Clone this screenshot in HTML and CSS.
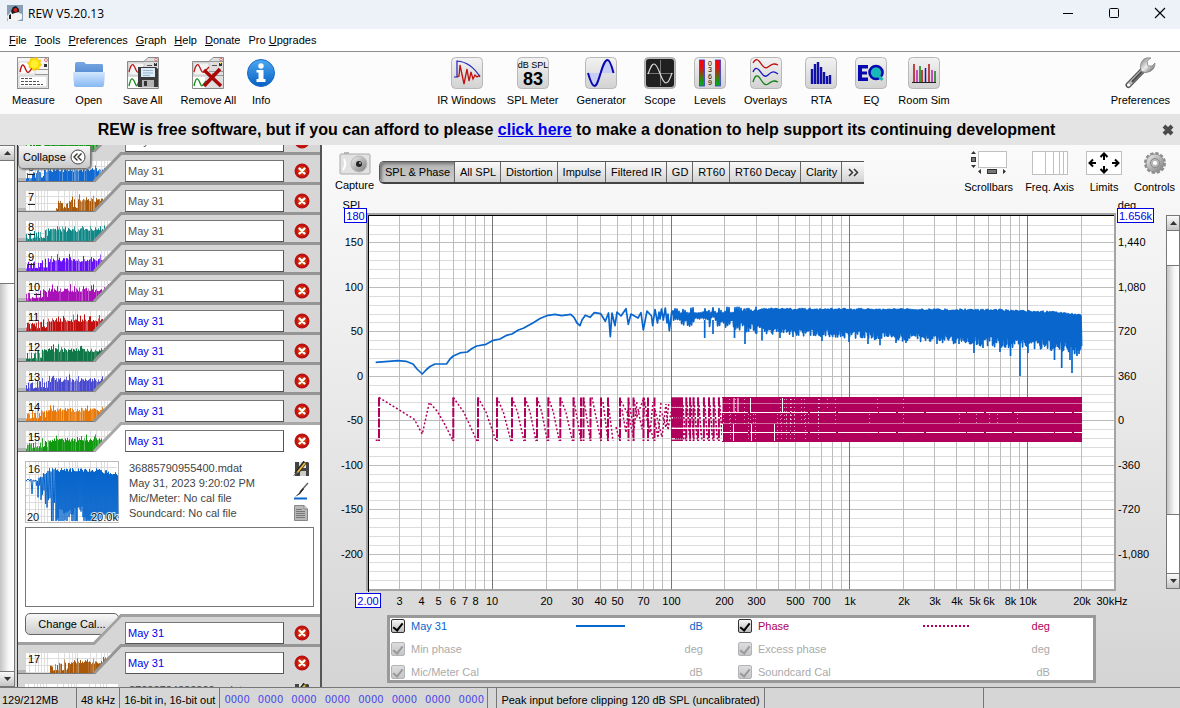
FILE: index.html
```
<!DOCTYPE html>
<html lang="en">
<head>
<meta charset="utf-8">
<title>REW V5.20.13</title>
<link rel="stylesheet" href="styles.css">
</head>
<body>
<svg class="defs" aria-hidden="true">
  <defs>
    <linearGradient id="tile" x1="0" y1="0" x2="0" y2="1"><stop offset="0" stop-color="#f2f2f2"/><stop offset="1" stop-color="#d2d2d2"/></linearGradient>
    <linearGradient id="folder" x1="0" y1="0" x2="0" y2="1"><stop offset="0" stop-color="#d3e7fd"/><stop offset="1" stop-color="#86b8f3"/></linearGradient>
    <linearGradient id="folderBack" x1="0" y1="0" x2="0" y2="1"><stop offset="0" stop-color="#79a7e2"/><stop offset="1" stop-color="#4d84cf"/></linearGradient>
    <linearGradient id="infoBlue" x1="0" y1="0" x2="0" y2="1"><stop offset="0" stop-color="#4ea8f2"/><stop offset="1" stop-color="#0560c4"/></linearGradient>
    <linearGradient id="level" x1="0" y1="0" x2="0" y2="1"><stop offset="0" stop-color="#ff0000"/><stop offset=".3" stop-color="#e01010"/><stop offset=".75" stop-color="#2a8a10"/><stop offset="1" stop-color="#00b020"/></linearGradient>
    <linearGradient id="metal" x1="0" y1="0" x2="1" y2="1"><stop offset="0" stop-color="#f0f0f0"/><stop offset="1" stop-color="#7a7a7a"/></linearGradient>
    <linearGradient id="jaw" x1="0" y1="0" x2="1" y2="1"><stop offset="0" stop-color="#777"/><stop offset=".5" stop-color="#ececec"/><stop offset="1" stop-color="#444"/></linearGradient>
    <radialGradient id="redBall"><stop offset="0" stop-color="#f08a10"/><stop offset=".5" stop-color="#d04010"/><stop offset="1" stop-color="#c40c0c"/></radialGradient>
    <symbol id="doc" viewBox="0 0 32 32">
      <path d="M.5 31.500V4.500H17L21 .5H31.500V31.500Z" fill="#dedede" stroke="#8a8a8a"/>
      <path d="M17 4.500H31M17 14.500H31M17 18.500H31" stroke="#999" fill="none"/>
      <rect x="2" y="6" width="15" height="12" fill="#f4f4f4" stroke="#bbb" stroke-width=".6"/>
      <path d="M2 15C5 3 7 8 9 13S13 14 17 10" fill="none" stroke="#c01818" stroke-width="1.300"/>
      <circle cx="29" cy="2.500" r="1.300" fill="#fff" stroke="#d04040" stroke-width=".7"/>
      <rect x="27" y="6" width="3" height="3" fill="#333"/><rect x="28" y="6" width="1" height="1" fill="#ffd000"/>
      <path d="M20 8.500H25M20 17H25" stroke="#555"/>
    </symbol>
    <symbol id="disk" viewBox="0 0 20 20">
      <path d="M0 0H18L20 2V20H0Z" fill="#3a3a3c"/><rect x="3" y="1" width="14" height="9" fill="#dcebf8"/><path d="M5 3.500H15M5 6H15M5 8.500H12" stroke="#8ca7c0" stroke-width=".8"/><rect x="4" y="13" width="12" height="7" fill="#b4b4b4"/><rect x="6" y="14" width="3" height="5" fill="#333"/>
    </symbol>
    <symbol id="pencildisk" viewBox="0 0 16 16">
      <path d="M2 1H15L16 2V15H2Z" fill="#444"/><path d="M6 1H13V7H6Z" fill="#e4e4e4"/><path d="M7 10H13V15H7Z" fill="#ccc"/><path d="M12 1L3 13" stroke="#222" stroke-width="4"/><path d="M12 2L4 12" stroke="#e9b93c" stroke-width="2"/><path d="M4 10L0 15L5 13Z" fill="#555"/>
    </symbol>
    <symbol id="brush" viewBox="0 0 16 18">
      <path d="M15 1L7 10" stroke="#666" stroke-width="1.500"/><path d="M10 6L6 11L2 15L7 12L11 7Z" fill="#222"/><path d="M1 16.500H14" stroke="#0866cc" stroke-width="2"/>
    </symbol>
    <symbol id="note" viewBox="0 0 16 16">
      <path d="M1.500.5H11L14.500 4V15.500H1.500Z" fill="#b8b8b8" stroke="#888"/><path d="M11 .5V4H14.500" fill="#ddd" stroke="#888"/><path d="M3 4.500H9M3 6.500H12M3 8.500H12M3 10.500H12M3 12.500H12" stroke="#777"/>
    </symbol>
    <symbol id="cross" viewBox="0 0 16 16">
      <circle cx="8" cy="8" r="7.500" fill="#bd1010"/><circle cx="8" cy="8" r="5.800" fill="url(#redBall)"/><path d="M5.500 5.500L10.500 10.500M10.500 5.500L5.500 10.500" stroke="#fff" stroke-width="2.400" stroke-linecap="round"/>
    </symbol>
  </defs>
</svg>

<header class="titlebar">
  <svg class="app-icon" width="16" height="16" viewBox="0 0 16 16" aria-hidden="true"><rect width="16" height="16" fill="#86a0b8"/><path d="M0 11L3 8L5 5L11 5L12 8L15 9V14L10 16H1Z" fill="#f4f4f4"/><path d="M4 6L6 2L9 1L12 4L12 7L8 8L5 9Z" fill="#1d1d22"/><circle cx="8.500" cy="5" r="2" fill="#d22"/><path d="M2 10L4 9V14L2 14Z" fill="#222"/></svg>
  <h1 class="titlebar-text">REW V5.20.13</h1>
  <div class="window-controls">
    <button aria-label="Minimize"><svg width="12" height="12"><path d="M1 6.500H11" stroke="#000"/></svg></button>
    <button aria-label="Maximize"><svg width="12" height="12"><rect x="1.500" y="1.500" width="9" height="9" rx="1" fill="none" stroke="#000"/></svg></button>
    <button aria-label="Close"><svg width="12" height="12"><path d="M1 1L11 11M11 1L1 11" stroke="#000" stroke-width="1.100"/></svg></button>
  </div>
</header>

<nav class="menubar">
  <button><u>F</u>ile</button><button><u>T</u>ools</button><button><u>P</u>references</button><button><u>G</u>raph</button><button><u>H</u>elp</button><button><u>D</u>onate</button><button>Pro <u>U</u>pgrades</button>
</nav>

<div class="toolbar">
  <div class="tool-group">
    <button class="tool"><svg width="32" height="32" viewBox="0 0 32 32"><rect x=".5" y=".5" width="31" height="31" fill="#f4f4f4" stroke="#8f8f8f"/><rect x="2" y="5" width="16" height="12" fill="#fff" stroke="#bbb" stroke-width=".6"/><path d="M3 15C5 4 7 8 9 13S13 14 16 9" fill="none" stroke="#c01818" stroke-width="1.400"/><rect x="2" y="19" width="28" height="11" fill="#fff" stroke="#aaa" stroke-width=".6"/><path d="M4 21.500H15M4 24.500H22M4 27.500H26" stroke="#555" stroke-dasharray="3 1"/><path d="M18 12.500H31M18 17.500H31" stroke="#999"/><circle cx="29" cy="3" r="1.500" fill="#fff" stroke="#d04040" stroke-width=".7"/><rect x="27" y="7" width="3" height="3" fill="#333"/><path d="M16 1L18 2L20 0L21 3L24 3L23 6L25 8L22 10L22 13L19 12L16 14L15 11L12 11L12 8L10 6L13 5L13 2Z" fill="#ffd800" stroke="#f0c000" stroke-width=".5"/><circle cx="17.500" cy="7" r="4" fill="#fff030"/></svg><span>Measure</span></button>
    <button class="tool"><svg width="32" height="32" viewBox="0 0 32 32"><path d="M2 7Q2 5 4 5H11L13 7H29Q30 7 30 9V20H2Z" fill="url(#folderBack)"/><path d="M0 15H32L31 28Q31 30 29 30H3Q1 30 1 28Z" fill="url(#folder)"/></svg><span>Open</span></button>
    <button class="tool"><svg width="32" height="32" viewBox="0 0 32 32"><use href="#doc" width="32" height="32"/><rect x="1" y="20" width="12" height="11" fill="#fff"/><path d="M2 29C4 19 6 21 8 26S10 29 12 24" fill="none" stroke="#189018" stroke-width="1.400"/><use href="#disk" x="11" y="10" width="20" height="20"/></svg><span>Save All</span></button>
    <button class="tool"><svg width="32" height="32" viewBox="0 0 32 32"><use href="#doc" width="32" height="32"/><rect x="1" y="20" width="12" height="11" fill="#fff"/><path d="M2 29C4 19 6 21 8 26S10 29 14 24" fill="none" stroke="#189018" stroke-width="1.400"/><path d="M12 13L29 29M28 12L12 29" stroke="#a80808" stroke-width="3.600"/></svg><span>Remove All</span></button>
    <button class="tool tool-tight"><svg width="28" height="32" viewBox="0 0 28 32"><circle cx="14" cy="16" r="13.500" fill="url(#infoBlue)" stroke="#1a6cc8"/><circle cx="14" cy="9" r="2.700" fill="#fff"/><path d="M9.500 13H16.500V22H18.500V25H9.500V22H11.500V15.500H9.500Z" fill="#fff"/></svg><span>Info</span></button>
  </div>
  <div class="tool-group tool-group-mid">
    <button class="tool tool-tight"><svg width="32" height="32" viewBox="0 0 32 32"><rect x=".5" y=".5" width="31" height="31" rx="4" fill="url(#tile)" stroke="#b8b8b8"/><path d="M3 20H6V4Q20 5 29 20" fill="none" stroke="#2020c0" stroke-width="1.200"/><path d="M6 20L8 19L9 8L13 27L16 12L18 24L20 15L22 22L24 18L26 20L29 18" fill="none" stroke="#c01010" stroke-width="1.300"/></svg><span>IR Windows</span></button>
    <button class="tool"><svg width="32" height="32" viewBox="0 0 32 32"><rect x=".5" y=".5" width="31" height="31" rx="4" fill="url(#tile)" stroke="#b8b8b8"/><text x="16" y="11" class="icon-db">dB SPL</text><text x="16" y="28" class="icon-num">83</text></svg><span>SPL Meter</span></button>
    <button class="tool"><svg width="32" height="32" viewBox="0 0 32 32"><rect x=".5" y=".5" width="31" height="31" rx="4" fill="url(#tile)" stroke="#b8b8b8"/><path d="M3 16H16C13 24 12 29 9.500 29S5 22 3 16M16 16C18 8 20 3 22.500 3S27 9 28 16Z" fill="#c8cdf5"/><path d="M3 16C5 23 7 29 9.500 29C14 29 17 3 22.500 3C25 3 27 10 28.500 16" fill="none" stroke="#0808b0" stroke-width="2"/></svg><span>Generator</span></button>
    <button class="tool"><svg width="32" height="32" viewBox="0 0 32 32"><rect x=".5" y=".5" width="31" height="31" rx="4" fill="#bbb" stroke="#aaa"/><rect x="2" y="2" width="28" height="28" rx="3" fill="#202020"/><path d="M3 16.500H29M16.500 3V29" stroke="#777"/><path d="M4 17C7 9 8 7 10 7C15 7 17 26 22 26C25 26 26 21 28 16" fill="none" stroke="#ddd" stroke-width="1.200"/></svg><span>Scope</span></button>
    <button class="tool"><svg width="32" height="32" viewBox="0 0 32 32"><rect x=".5" y=".5" width="31" height="31" rx="4" fill="url(#tile)" stroke="#b8b8b8"/><rect x="5.500" y="3" width="5" height="26" fill="url(#level)" stroke="#3838d0" stroke-width=".8"/><rect x="21.500" y="3" width="5" height="26" fill="url(#level)" stroke="#3838d0" stroke-width=".8"/><g class="icon-scale"><text x="16" y="9">0</text><text x="16" y="15">3</text><text x="16" y="22">6</text><text x="16" y="28">9</text></g></svg><span>Levels</span></button>
    <button class="tool"><svg width="32" height="32" viewBox="0 0 32 32"><rect x=".5" y=".5" width="31" height="31" rx="4" fill="url(#tile)" stroke="#b8b8b8"/><g fill="none" stroke-width="1.300"><path d="M3 6C5 2 7 2 9 4S14 13 18 10S24 6 28 8" stroke="#c01010"/><path d="M3 15C5 10 7 11 9 13S14 22 18 18S24 14 28 17" stroke="#1818c0"/><path d="M3 25C5 18 7 18 9 20S14 30 18 27S24 23 28 25" stroke="#108010"/></g></svg><span>Overlays</span></button>
    <button class="tool"><svg width="32" height="32" viewBox="0 0 32 32"><rect x=".5" y=".5" width="31" height="31" rx="4" fill="url(#tile)" stroke="#b8b8b8"/><path d="M7 27V12M10 27V7M13 27V5M16 27V10M19 27V15M22 27V19M25 27V18" stroke="#1010a8" stroke-width="2.400"/></svg><span>RTA</span></button>
    <button class="tool"><svg width="32" height="32" viewBox="0 0 32 32"><rect x=".5" y=".5" width="31" height="31" rx="4" fill="url(#tile)" stroke="#b8b8b8"/><path d="M3 8H13V11.500H7V14.500H12V17.500H7V20.500H13V24H3Z" fill="#0808b0"/><circle cx="21" cy="15.500" r="6.500" fill="#18b8b8" stroke="#0808b0" stroke-width="2.600"/><path d="M22 17L27.500 23" stroke="#18b8b8" stroke-width="3"/></svg><span>EQ</span></button>
    <button class="tool tool-tight"><svg width="32" height="32" viewBox="0 0 32 32"><rect x=".5" y=".5" width="31" height="31" rx="4" fill="url(#tile)" stroke="#b8b8b8"/><g stroke-width="1.500"><path d="M6 25V7M14 25V13M21 25V7" stroke="#b01010"/><path d="M9 25V13M24 25V13" stroke="#c018c0"/><path d="M12 25V9M27 25V14" stroke="#108010"/><path d="M17.500 25V11" stroke="#1818c0"/></g><path d="M4 25.500H28" stroke="#222"/></svg><span>Room Sim</span></button>
  </div>
  <div class="tool-group">
    <button class="tool"><svg width="32" height="32" viewBox="0 0 32 32"><path d="M4.500 28L19 13" stroke="#555" stroke-width="6" stroke-linecap="round"/><path d="M5 27.500L19 13" stroke="#b8b8b8" stroke-width="3.500" stroke-linecap="round"/><path d="M8 25L18 14.500" stroke="#4c4c4c" stroke-width="2"/><path d="M17 14Q15 6 20 2Q23 0 27 1L23 4L24 9L28 9L31 6Q31 12 26 14.500Q21 17 17 14Z" fill="url(#jaw)" stroke="#777" stroke-width=".7"/><circle cx="4.500" cy="28" r="1.500" fill="#fff"/></svg><span>Preferences</span></button>
  </div>
</div>

<div class="donate">
  <p>REW is free software, but if you can afford to please <a href="#donate">click here</a> to make a donation to help support its continuing development</p>
  <button class="donate-close" aria-label="Dismiss"><svg width="14" height="14"><path d="M3 3L11 11M11 3L3 11" stroke="#4a4a4a" stroke-width="4"/></svg></button>
</div>

<main class="workspace">
  <div class="scrollbar scrollbar-list"><button aria-label="Scroll up"><svg width="7" height="4"><path d="M0 4L3.500 0L7 4Z" fill="#333"/></svg></button><div class="track"><div class="thumb"></div></div><button aria-label="Scroll down"><svg width="7" height="4"><path d="M0 0L3.500 4L7 0Z" fill="#333"/></svg></button></div>
  <section class="measurements" aria-label="Measurements">
    <button class="collapse">Collapse <svg width="16" height="16" viewBox="0 0 16 16"><circle cx="8" cy="8" r="7" fill="#fff" stroke="#444"/><path d="M7.500 4.500L4 8L7.500 11.500M11.500 4.500L8 8L11.500 11.500" fill="none" stroke="#333" stroke-width="1.400"/></svg></button>
    <ul class="entries" id="entries"></ul>
  </section>

  <section class="graph" aria-label="Graph">
    <div class="graph-bar">
      <button class="tool capture"><svg width="32" height="24" viewBox="0 0 32 24"><path d="M5 1H10V4H5Z" fill="#bbb"/><rect x="1" y="3" width="30" height="20" rx="1" fill="#e2e2e2" stroke="#aaa"/><path d="M5 8Q8 13 4 19" fill="none" stroke="#fff" stroke-width="2"/><circle cx="20" cy="13" r="8" fill="url(#metal)" stroke="#bbb"/><circle cx="20" cy="13" r="3" fill="#222"/><circle cx="21" cy="12" r="1" fill="#bbc"/></svg><span>Capture</span></button>
      <div class="tabs">
        <button class="tab active">SPL &amp; Phase</button><button class="tab">All SPL</button><button class="tab">Distortion</button><button class="tab">Impulse</button><button class="tab">Filtered IR</button><button class="tab">GD</button><button class="tab">RT60</button><button class="tab">RT60 Decay</button><button class="tab">Clarity</button><button class="tab" aria-label="More"><svg width="11" height="9"><path d="M1 1L4.500 4.500L1 8M6 1L9.500 4.500L6 8" fill="none" stroke="#333" stroke-width="1.500"/></svg></button>
      </div>
      <div class="graph-tools">
        <button class="tool"><svg width="38" height="26" viewBox="0 0 38 26"><rect x="8.500" y="1.500" width="28" height="16" fill="#fff" stroke="#c0c0c0"/><path d="M1 4L3.500 1L6 4ZM1 15L3.500 18L6 15ZM11 19V24L8 21.500ZM33 19V24L36 21.500Z" fill="#333"/><rect x="1.500" y="7.500" width="4" height="4" fill="#777" stroke="#333"/><rect x="17.500" y="19.500" width="9" height="4" fill="#777" stroke="#333"/></svg><span>Scrollbars</span></button>
        <button class="tool"><svg width="36" height="26" viewBox="0 0 36 26"><rect x=".5" y="1.500" width="35" height="23" fill="#fff" stroke="#c0c0c0"/><path d="M13.500 2V24M21.500 2V24M27.500 2V24M31.500 2V24" stroke="#c0c0c0"/></svg><span>Freq. Axis</span></button>
        <button class="tool"><svg width="36" height="26" viewBox="0 0 36 26"><rect x=".5" y="1.500" width="35" height="23" fill="#fff" stroke="#c0c0c0"/><path d="M7 9.500L3.500 13L7 16.500M3.500 13H10M29 9.500L32.500 13L29 16.500M32.500 13H26M14.500 7L18 3.500L21.500 7M18 4V10M14.500 19L18 22.500L21.500 19M18 22V16" fill="none" stroke="#000" stroke-width="2"/></svg><span>Limits</span></button>
        <button class="tool"><svg width="24" height="26" viewBox="0 0 24 26"><circle cx="12" cy="13" r="9.500" fill="none" stroke="#8c8c8c" stroke-width="3" stroke-dasharray="3.200 1.774"/><circle cx="12" cy="13" r="9" fill="url(#metal)" stroke="#909090"/><circle cx="12" cy="13" r="4.500" fill="#bbb" stroke="#888"/><circle cx="12" cy="13" r="2" fill="#fff"/></svg><span>Controls</span></button>
      </div>
    </div>
    <div class="plot-row">
      <svg class="plot" id="plot" viewBox="336 198 830 412" role="img" aria-label="SPL and phase against frequency"></svg>
      <div class="scrollbar scrollbar-plot"><button aria-label="Scroll up"><svg width="7" height="4"><path d="M0 4L3.500 0L7 4Z" fill="#333"/></svg></button><div class="track"><div class="thumb"></div></div><button aria-label="Scroll down"><svg width="7" height="4"><path d="M0 0L3.500 4L7 0Z" fill="#333"/></svg></button></div>
    </div>
    <div class="legend">
      <label class="trace spl"><input type="checkbox" checked><span>May 31</span><i class="swatch"></i><b>dB</b></label>
      <label class="trace phase"><input type="checkbox" checked><span>Phase</span><i class="swatch"></i><b>deg</b></label>
      <label class="trace"><input type="checkbox" checked disabled><span>Min phase</span><i></i><b>deg</b></label>
      <label class="trace"><input type="checkbox" checked disabled><span>Excess phase</span><i></i><b>deg</b></label>
      <label class="trace"><input type="checkbox" checked disabled><span>Mic/Meter Cal</span><i></i><b>dB</b></label>
      <label class="trace"><input type="checkbox" checked disabled><span>Soundcard Cal</span><i></i><b>dB</b></label>
    </div>
  </section>
</main>

<footer class="status">
  <span class="cell cell-memory">129/212MB</span><span class="cell">48 kHz</span><span class="cell">16-bit in, 16-bit out</span>
  <span class="cell cell-bits"><b>0000</b><b>0000</b><b>0000</b><b>0000</b><b>0000</b><b>0000</b><b>0000</b><b>0000</b></span>
  <span class="cell"></span><span class="cell">Peak input before clipping 120 dB SPL (uncalibrated)</span><span class="cell cell-wide"></span><span></span>
</footer>
<script src="app.js"></script>
</body>
</html>
```
FILE: styles.css
```
* { box-sizing: border-box; }
html, body { height: 100%; }
body {
  margin: 0;
  display: flex;
  flex-direction: column;
  overflow: hidden;
  background: #fcfcfc;
  color: #000;
  font: 11px/14px "Liberation Sans", Arial, sans-serif;
}
button, input, textarea { font: inherit; color: inherit; }
button { margin: 0; padding: 0; border: 0; background: none; }
svg { display: block; flex: none; }
.defs { position: absolute; width: 0; height: 0; }

.titlebar { flex: none; height: 29px; display: flex; align-items: center; padding: 0 5px 3px 7px; background: #edf2f9; }
.titlebar-text { margin: 0 0 0 5px; padding-top: 2px; font: 12px/16px "Open Sans", sans-serif; }
.window-controls { margin-left: auto; display: flex; }
.window-controls button { width: 46px; height: 24px; display: grid; place-items: center; }
.window-controls button:last-child { width: 30px; margin-left: 8px; }

.menubar { flex: none; height: 23px; display: flex; align-items: center; gap: 8px; padding: 0 9px; background: #fff; border-bottom: 1px solid #8e8e8e; }

.toolbar { flex: none; height: 62px; display: flex; justify-content: space-between; padding: 0 1px 0 3px; }
.tool-group { display: flex; }
.tool-group-mid { margin-left: 8px; }
.tool { display: flex; flex-direction: column; align-items: center; padding: 5px 9px 0; white-space: nowrap; }
.tool span { margin-top: 4px; }
.tool-tight { padding: 5px 2px 0; }
.icon-db { font-size: 9px; text-anchor: middle; }
.icon-num { font-size: 18px; font-weight: bold; text-anchor: middle; }
.icon-scale { font-size: 7px; text-anchor: middle; }

.donate { flex: none; height: 31px; display: flex; align-items: center; padding: 0 5px 0 0; background: #e4e4e4; }
.donate p { flex: 1; margin: 0; padding: 1px 8px 0 0; text-align: center; font-size: 16px; line-height: 20px; font-weight: bold; white-space: nowrap; }
.donate a { color: #0000f0; }

.workspace { flex: 1; min-height: 0; display: flex; background: #d6d6d6; }

.scrollbar { display: flex; flex-direction: column; width: 15px; flex: none; border: 1px solid #777; border-left: 0; background: #fff; }
.scrollbar button { height: 15px; display: grid; place-items: center; background: linear-gradient(#fafafa, #c4c4c4); }
.scrollbar button:first-child { border-bottom: 1px solid #777; }
.scrollbar button:last-child { border-top: 1px solid #777; }
.scrollbar .track { flex: 1; display: flex; flex-direction: column; }
.scrollbar .thumb { background: linear-gradient(90deg, #c4c4c4, #f6f6f6 60%, #fff); }
.scrollbar-list .track { justify-content: flex-end; }
.scrollbar-list .thumb { height: 76%; border-top: 1px solid #777; }
.scrollbar-plot { width: 14px; border-left: 1px solid #777; margin: 17px 0 21px; }
.scrollbar-plot .thumb { height: 73%; margin-top: 34px; border: 1px solid #777; border-width: 1px 0; }

.measurements { position: relative; flex: none; width: 305px; margin-left: 2px; overflow: hidden; border-left: 1px solid #333; border-right: 2px solid #555; }
.collapse { position: absolute; z-index: 2; left: 0; top: 1px; display: flex; align-items: center; gap: 4px; height: 23px; padding: 0 4px; border: 1px solid #777; border-top: 0; border-radius: 0 0 5px 5px; background: linear-gradient(#f6f6f6, #c8c8c8); box-shadow: 1px 1px 2px #777; }
.entries { list-style: none; margin: -23px 0 0; padding: 0; }
.entry { position: relative; height: 30px; display: grid; grid-template-columns: 107px 1fr 36px; align-items: start; padding-top: 8px; }
.entry-shape { position: absolute; left: 0; top: 0; width: 100%; height: 31px; overflow: hidden; }
.entry-name { position: relative; min-width: 0; height: 22px; padding: 0 2px; border: 1px solid #777; border-right-color: #555; border-bottom-color: #555; border-radius: 0; background: #fff; color: #505050; outline: 0; }
.entry.unsaved .entry-name { color: #0000e8; }
.entry-delete { position: relative; justify-self: center; margin-top: 3px; }
.entry-number { position: relative; padding-left: 10px; }
.entry-number.marked::after { content: ""; display: block; width: 7px; border-bottom: 1px solid #222; }
.entry-number.marked-last::after { content: ""; display: block; width: 7px; margin-left: 6px; border-bottom: 1px solid #222; }
.change-cal { align-self: start; width: 94px; height: 22px; margin: -9px 0 0 7px; border: 1px solid #666; border-radius: 5px; background: linear-gradient(#f8f8f8, #ccc); clip-path: polygon(0 0, 100% 0, 100% 14%, 80% 100%, 0 100%); position: relative; }

.detail { padding: 9px 6px 7px 7px; }
.detail.open { background: #fff; }
.detail-info { display: flex; gap: 10px; }
.detail-lines { flex: 1; margin: 0; font-size: 11px; line-height: 15px; color: #444; }
.detail-icons { display: flex; flex-direction: column; justify-content: space-between; padding: 0 5px 2px 0; }
.detail-notes { display: block; width: 100%; height: 80px; margin-top: 4px; resize: none; border: 1px solid #777; background: #fff; }
.thumb-text { font-size: 11px; fill: #111; paint-order: stroke; stroke: #fff; stroke-opacity: .8; stroke-width: 2px; }

.graph { flex: 1; min-width: 0; display: flex; flex-direction: column; padding-left: 14px; background: linear-gradient(#fafafa, #f0f0f0 30%, #d4d4d4); }
.graph-bar { display: flex; flex: none; height: 53px; align-items: flex-start; }
.graph-bar .tool { padding: 5px 0 0; }
.graph-bar .tool span { margin-top: 4px; }
.graph-bar .capture { padding: 6px 0 0; width: 37px; }
.graph-bar .capture span { margin-top: 3px; }
.tabs { display: flex; height: 23px; margin: 16px 0 0 6px; border: 1px solid #555; border-right: 0; border-bottom: 2px solid #444; border-radius: 5px 0 0 5px; }
.tab { padding: 0 4px 0 5px; border-right: 1px solid #666; background: linear-gradient(#fafafa, #d2d2d2); white-space: nowrap; }
.tab:last-child { padding: 0 5px 0 6px; border-right: 0; }
.tab.active { padding: 0 4px 0 5px; background: linear-gradient(#b4b4b4, #ccc); box-shadow: inset 2px 2px 3px #777; border-radius: 4px 0 0 4px; }
.graph-tools { margin-left: auto; display: flex; gap: 12px; padding-right: 5px; }

.plot-row { display: flex; flex: none; }
.plot { flex: 1; min-width: 0; }
.axis { font-size: 11px; }
.limit { fill: #0000e8; }
.legend { display: grid; grid-template-columns: 1fr 1fr; grid-auto-rows: 23px; width: 84%; margin: 5px 0 0 51px; padding-right: 9px; border: 3px solid #999; background: #fff; height: 68px; overflow: hidden; align-content: center; }
.trace { display: grid; grid-template-columns: 14px 171px 1fr 78px; align-items: center; padding-left: 1px; color: #aaa; }
.trace span { padding-left: 6px; }
.trace b { font-weight: normal; text-align: right; padding-right: 34px; }
.trace input { appearance: none; width: 14px; height: 14px; margin: 0; border: 1px solid #b0b4b8; border-radius: 2px; background: linear-gradient(#ddd, #c6c6c6); display: grid; place-items: center; }
.trace input::after { content: ""; width: 4px; height: 8px; border: solid #999; border-width: 0 2px 2px 0; transform: rotate(38deg); }
.spl input, .phase input { border-color: #333; background: linear-gradient(#f6f6f6, #bbb); }
.spl input::after, .phase input::after { border-color: #000; }
.spl { color: #0866cc; }
.phase { color: #b0005c; }
.spl .swatch { width: 49px; border-top: 2px solid #0866cc; }
.phase .swatch { width: 47px; height: 2px; background: repeating-linear-gradient(90deg, #b0005c 0 2px, transparent 2px 4px); }

.status { flex: none; height: 21px; display: flex; align-items: center; border-top: 1px solid #777; background: #d6d6d6; white-space: nowrap; }
.status > span { height: 20px; line-height: 24px; }
.cell { padding: 0 4px; border-right: 1px solid #777; }
.cell-memory { width: 77px; padding-left: 2px; }
.cell-bits { display: flex; gap: 8px; width: 268px; color: #4848e8; font: 10px "DejaVu Sans", sans-serif; }
.cell-bits b { font-weight: normal; }
.cell-wide { width: 219px; }
```
FILE: app.js
```
let seed = 7;
const rnd = () => (seed = (seed * 16807) % 2147483647) / 2147483647;

/* Measurement list */
const SHAPE = 'M0 29.500H76L103 1.500H320';
const grid = (x, y, w, h) => {
  let d = '';
  [3, 9, 12, 15, 18, 21, 32, 38, 43, 46, 49, 51, 64, 70, 75, 78, 81].forEach(v => { if (v < w) d += `M${x + v}.500 ${y}v${h}`; });
  for (let v = 5; v < h; v += 7) d += `M${x} ${y + v}.500h${w}`;
  return `<rect x="${x}" y="${y}" width="${w}" height="${h}" fill="#fff"/><path d="${d}" stroke="#ddd" fill="none"/>`;
};
const bars = (color, from) => {
  const shades = ['', '', ''];
  for (let x = 8 + from; x < 100; x += 1) {
    const rise = Math.min(1, .5 + (x - from) / 60);
    let h = (9 + rnd() * 4 + (rnd() > .88 ? 4 : 0)) * rise;
    if (from + 30 > x && rnd() > .55) h *= .35;
    shades[rnd() > .4 ? 0 : rnd() > .4 ? 1 : 2] += `M${x}.500 29V${(29 - h).toFixed(1)}`;
  }
  return shades.map((d, i) => `<path d="${d}" stroke="${color}" opacity="${[1, .85, .65][i]}" fill="none"/>`).join('');
};
const cross = '<button class="entry-delete" aria-label="Remove measurement"><svg width="16" height="16"><use href="#cross"/></svg></button>';
const row = (n, color, from = 0) => {
  const white = n === 15;
  const mark = n === 10 ? 'marked-last' : n < 10 ? 'marked' : '';
  const number = n > 5 ? `<span class="entry-number ${mark}">${n}</span>` : '<span></span>';
  return `<li class="entry ${n > 10 ? 'unsaved' : ''}">
    <svg class="entry-shape"><rect y="26" width="76" height="3" fill="#b4b4b4"/>${grid(8, 9, 92, 20)}${bars(color, from)}
    <path d="M76 31V29.500L103 1.500H320V31Z" fill="${white ? '#fff' : '#d6d6d6'}"/>
    <path d="M0 29.500H76" stroke="#777" stroke-width="1"/><path d="M76 29.500L103 1.500H320" fill="none" stroke="${white ? '#a8a8a8' : '#959595'}" stroke-width="3"/></svg>
    ${number}<input class="entry-name" aria-label="Measurement ${n} name" value="May 31">${cross}</li>`;
};
const response = () => {
  let d = 'M1 20L3 18L5 20L6 18L7 33L8 19L10 20';
  for (let x = 11; x < 93; x += x < 30 ? 1.5 : 1) {
    const top = x < 24 ? 19 - (x - 10) * .8 + rnd() * 3 : 7 + rnd() * 4 + Math.max(0, x - 70) * .2;
    const low = x < 24 ? 22 + rnd() * 26 : x > 66 ? 52 + rnd() * 9 : Math.min(60, 26 + x * .3 + rnd() * 36);
    d += `L${x} ${top.toFixed(1)}L${x + .5} ${low.toFixed(1)}`;
  }
  return `<svg width="94" height="62"><rect x=".5" y=".5" width="93" height="61" fill="#fff" stroke="#bbb"/>${grid(1, 1, 91, 60)}<path d="${d}" fill="none" stroke="#0866cc" stroke-width="1"/><g class="thumb-text"><text x="3" y="12">16</text><text x="2" y="60">20</text><text x="66" y="60">20.0k</text></g></svg>`;
};
const icons = '<div class="detail-icons"><svg width="16" height="16"><use href="#pencildisk"/></svg><svg width="16" height="18"><use href="#brush"/></svg><svg width="16" height="16"><use href="#note"/></svg></div>';

document.getElementById('entries').innerHTML =
  row(5, '#109810') + row(6, '#1068d0') + row(7, '#a85808', 30) + row(8, '#108888') + row(9, '#6810f8') + row(10, '#a810b8') +
  row(11, '#c01010') + row(12, '#107848') + row(13, '#4848d0') + row(14, '#e87808') + row(15, '#109810') +
  `<li class="detail open"><div class="detail-info">${response()}<p class="detail-lines">36885790955400.mdat<br>May 31, 2023 9:20:02 PM<br>Mic/Meter: No cal file<br>Soundcard: No cal file</p>${icons}</div><textarea class="detail-notes" aria-label="Notes"></textarea></li>
  <li class="entry unsaved"><svg class="entry-shape"><path d="M0 0H104V2L76 30H0Z" fill="#fff"/><path d="${SHAPE}" fill="none" stroke="#a0a0a0" stroke-width="3"/></svg>
  <button class="change-cal">Change Cal...</button><input class="entry-name" aria-label="Measurement 16 name" value="May 31">${cross}</li>` +
  row(17, '#a85808', 24) +
  `<li class="detail"><div class="detail-info"><svg width="94" height="62">${grid(0, 1, 93, 60)}</svg><p class="detail-lines">37288734833300.mdat</p>${icons}</div></li>`;

/* Plot */
const X = f => 493.3 + Math.log10(f / 10) * 178.3;
const Y = v => 375.8 - v * .889;
let minor = '', major = '', decade = '';
for (let v = -230; v < 180; v += 10) {
  const y = Math.round(Y(v)) + .5;
  if (v % 50) minor += `M369 ${y}H1114`; else major += `M369 ${y}H1114`;
}
for (let e = 0; e < 5; e++) for (let m = 1; m < 10; m++) {
  const f = m * 10 ** e;
  if (f <= 2 || f >= 30000) continue;
  const line = `M${Math.round(X(f)) - .5} 216V589`;
  if (m === 1) decade += line; else major += line;
}

const start = [[375.7, 362.3], [398, 360.7], [406, 361.3], [413, 364], [417, 369], [422.3, 374], [426, 370], [430, 366.5], [435, 364], [446.7, 363.8], [450, 359], [453.3, 356], [460, 352.9], [467.3, 352], [472, 348.5], [476.7, 346], [486, 344.3], [493.3, 340.3], [500, 339], [506.7, 335.3], [512, 334], [518.3, 330], [523.3, 328.3], [533.3, 322.7], [540, 318.5], [546.7, 315.7], [555, 314.3], [561.7, 315.7], [570.7, 314.3], [574, 317.3], [577, 323], [580, 325.7], [582, 320], [585.3, 315.3], [590, 317.3], [594.3, 312.7], [600.7, 313.7], [605.3, 321.3], [608.5, 313], [610.3, 336.7], [612, 313], [615, 325.7], [617, 312], [621, 316], [626, 308.7], [628.3, 324.3], [631, 314], [638, 318], [641, 312.7], [643.3, 330], [647, 311], [651.5, 316], [652.7, 325.7], [655, 309.5], [657.5, 323], [659, 312], [660, 319], [661.5, 309], [663.3, 320], [665.3, 308], [667, 323], [668, 314], [669.3, 330.7], [671.7, 312]];
let spl = 'M' + start.map(p => p.join(' ')).join('L');
const mix = (stops, x) => {
  let i = 1;
  while (i < stops.length - 1 && stops[i][0] < x) i++;
  const [a, b] = [stops[i - 1], stops[i]];
  return a[1] + (b[1] - a[1]) * (x - a[0]) / (b[0] - a[0]);
};
const topEdge = [[671, 309], [850, 309], [1000, 310], [1050, 312], [1082, 315]];
const lowEdge = [[671, 326], [740, 332], [790, 336], [850, 338], [920, 342], [1000, 347], [1040, 349], [1082, 355]];
for (let x = 673; x < 1082; x += x < 740 ? 2 : 1) {
  const deep = mix(lowEdge, x), top = mix(topEdge, x);
  const solid = Math.min(.72, .1 + (x - 671) / 160);
  const jitter = x < 760 ? 6 : 2;
  spl += `L${x.toFixed(1)} ${(top + (rnd() - .3) * jitter).toFixed(1)}L${(x + .6).toFixed(1)} ${(top + (deep - top) * (solid + (1 - solid) * rnd())).toFixed(1)}`;
}
const spikes = [[704.7, 338], [713, 334], [734.5, 338], [745, 344], [762, 340.5], [780, 338], [793, 337], [822, 341], [849, 342], [868, 344], [880, 345.3], [896, 343], [906, 343], [937, 344], [959, 344], [974, 353], [983, 348], [1000, 352], [1010.5, 356], [1020, 376], [1028, 353], [1040, 346], [1054.5, 360], [1061.7, 368], [1072, 373], [1070, 360], [1077, 356], [1079, 354]];
spl += spikes.map(([x, y]) => `M${x} 320V${y}`).join('');

const wraps = [379, 453.3, 478, 497, 512, 525, 537, 548.3, 560.3, 573.5];
let dashes = wraps.map(x => `M${x} 397.500V441`).join('');
let dots = 'M375.700 440.300H379M379 397.500L414.300 419.300L422.300 434L429.300 402.500L437 411L443 421L453.300 441';
for (let i = 1; i < wraps.length - 1; i++) dots += `M${wraps[i]} 397.500L${wraps[i] + (wraps[i + 1] - wraps[i]) * .42} 412L${wraps[i + 1] - 1} 441`;
dots += 'M573.500 397.500L581 441M583.500 397.500L590.500 441M592 397.500L601 441M603 402L608 441M608 401L613 441M616 427L620 441M621 401L629 416L634 441M634 400L637 416L643 400M644 398L648 420L654 441M655 410L662 437L666 404L668 430L671 412';
dashes += [581, 583.5, 590.5, 601, 608, 620, 628.5, 633.5, 643.5, 648, 654.5].map(x => `M${x} 397.500V441`).join('');
for (let i = 0; i < 6; i++) dots += `M${622 + i * 8} ${408 + rnd() * 10}L${626 + i * 8} ${425 + rnd() * 14}L${629 + i * 8} 402`;
for (let x = 672; x < 722; x += x < 681 ? 2 : 3 + rnd() * 3) {
  dashes += `M${x.toFixed(1)} 397.500V441`;
  dots += `M${x.toFixed(1)} 397.500L${(x + 4).toFixed(1)} 441M${(x + 1).toFixed(1)} 405l2 30`;
}
let breaks = '';
[722, 734, 738, 750.5, 782.5].forEach(x => { breaks += `M${x} 398V413`; });
[722.5, 733.5, 751.5, 774.5].forEach(x => { breaks += `M${x} 424V441`; });
let specks = '';
for (let i = 0; i < 40; i++) {
  const x = Math.round(722 + rnd() * (i < 26 ? 120 : 320));
  specks += `M${x}.500 ${rnd() > .5 ? 399 : 414}v${i < 26 ? 27 : 9}`;
}
const label = (x, y, text, anchor = 'end', cls = '') => `<text x="${x}" y="${y}" text-anchor="${anchor}" class="${cls}">${text}</text>`;
let labels = label(353, 209, 'SPL', 'middle') + label(1127, 209, 'deg', 'middle');
[[150, '1,440'], [100, '1,080'], [50, '720'], [0, '360'], [-50, '0'], [-100, '-360'], [-150, '-720'], [-200, '-1,080']].forEach(([v, r]) => {
  const y = Math.round(Y(v) + 4);
  labels += label(363, y, v) + label(1118, y, r, 'start');
});
[[399.5, '3'], [421.5, '4'], [438.5, '5'], [453, '6'], [465, '7'], [475.5, '8'], [492, '10'], [546.5, '20'], [577.5, '30'], [600.5, '40'], [617.5, '50'], [643.5, '70'], [671.5, '100'], [724.5, '200'], [756.5, '300'], [795.5, '500'], [821.5, '700'], [850, '1k'], [904, '2k'], [935, '3k'], [957, '4k'], [975, '5k'], [989, '6k'], [1010.5, '8k'], [1028, '10k'], [1082, '20k'], [1112, '30kHz']]
  .forEach(([x, t]) => { labels += label(x, 605, t, 'middle'); });
const limit = (x, y, w, t) => `<rect x="${x}.500" y="${y}.500" width="${w}" height="14" fill="#fff" stroke="#0000e8"/>` + label(x + w / 2 + .5, y + 12, t, 'middle', 'limit');

document.getElementById('plot').innerHTML =
  `<rect x="366" y="213" width="750" height="378" fill="#a4a4a4"/><rect x="369" y="216" width="745" height="373" fill="#fff"/>
  <g fill="none"><path d="${minor}" stroke="#dcdcdc"/><path d="${major}" stroke="#bcbcbc"/><path d="${decade}" stroke="#777"/>
  <path d="M368.500 592V215.500H1114" stroke="#000"/>
  <path d="${spl}" stroke="#0866cc" stroke-width="1.700" stroke-linejoin="round"/>
  <path d="${dots}" stroke="#b0005c" stroke-width="1.500" stroke-dasharray="2 2"/><path d="${dashes}" stroke="#b0005c" stroke-width="2" stroke-dasharray="9 1.500"/></g>
  <rect x="722" y="397" width="360" height="45" fill="#b0005c"/>
  <g fill="none"><path d="M722 412.500H1082M722 432.500H1082" stroke="#fff" stroke-dasharray="26 2 40 1 17 2"/><path d="M722 403.500H1082M722 423.500H1082" stroke="#d070a0"/><path d="${specks}" stroke="#fff" stroke-dasharray="1 3" opacity=".6"/><path d="${breaks}" stroke="#fff"/></g>
  <g class="axis">${labels}${limit(344, 208, 22, '180')}${limit(1117, 208, 36, '1.656k')}${limit(355, 593, 25, '2.00')}</g>`;
```
